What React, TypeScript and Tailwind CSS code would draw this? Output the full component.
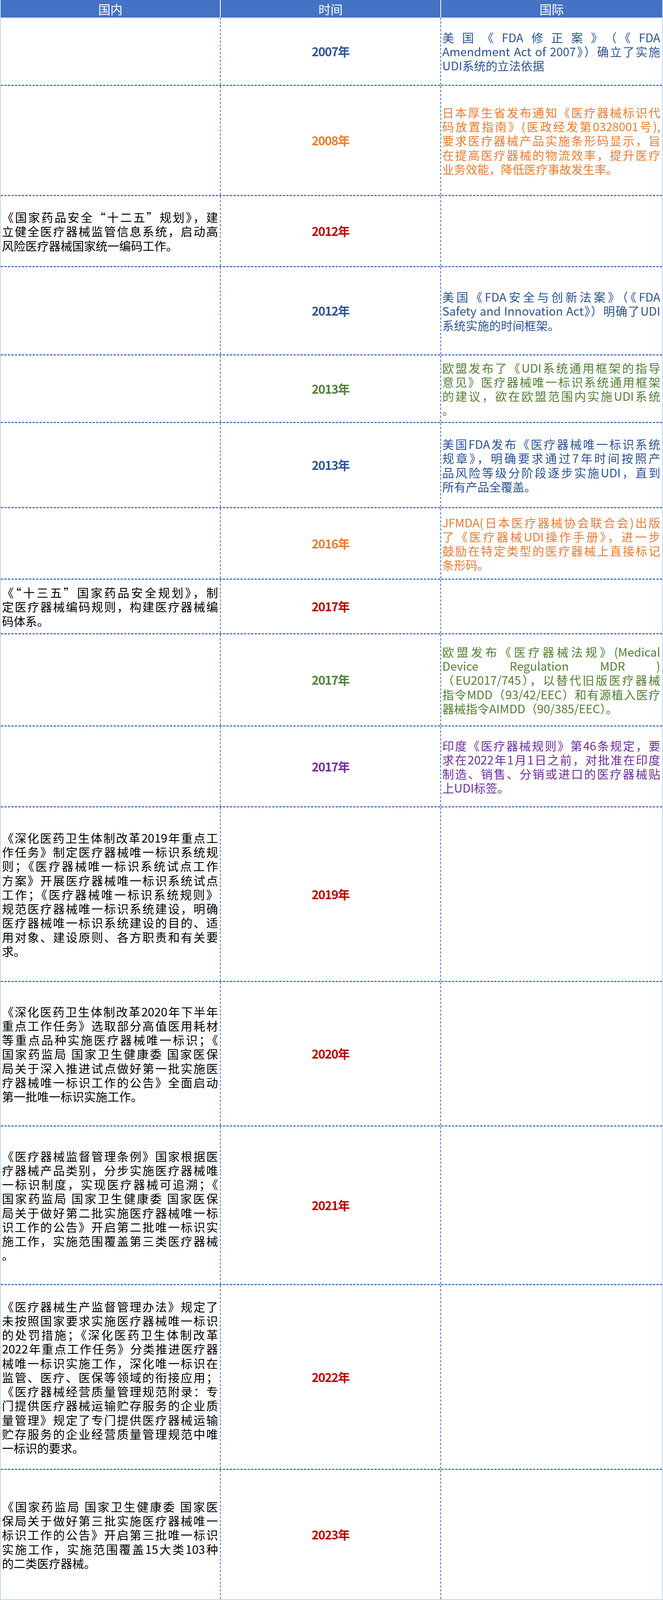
import React from 'react'

type Tone = 'blue' | 'orange' | 'red' | 'green' | 'purple'

interface Row {
  year: string
  tone: Tone
  side: 'cn' | 'intl'
  h: string
  lines: string[]
}

const toneText: Record<Tone, string> = {
  blue: 'text-[#2F5597]',
  orange: 'text-[#ED7D31]',
  red: 'text-[#C00000]',
  green: 'text-[#548235]',
  purple: 'text-[#7030A0]',
}

// row heights fit the 4096px tall window
const rows: Row[] = [
  {
    year: '2007年',
    tone: 'blue',
    side: 'intl',
    h: 'h-[175px]',
    lines: ['美国《FDA修正案》（《FDA', 'Amendment Act of 2007》）确立了实施', 'UDI系统的立法依据'],
  },
  {
    year: '2008年',
    tone: 'orange',
    side: 'intl',
    h: 'h-[282px]',
    lines: [
      '日本厚生省发布通知《医疗器械标识代',
      '码放置指南》(医政经发第0328001号),',
      '要求医疗器械产品实施条形码显示，旨',
      '在提高医疗器械的物流效率，提升医疗',
      '业务效能，降低医疗事故发生率。',
    ],
  },
  {
    year: '2012年',
    tone: 'red',
    side: 'cn',
    h: 'h-[182px]',
    lines: ['《国家药品安全“十二五”规划》，建', '立健全医疗器械监管信息系统，启动高', '风险医疗器械国家统一编码工作。'],
  },
  {
    year: '2012年',
    tone: 'blue',
    side: 'intl',
    h: 'h-[226px]',
    lines: ['美国《FDA安全与创新法案》（《FDA', 'Safety and Innovation Act》）明确了UDI', '系统实施的时间框架。'],
  },
  {
    year: '2013年',
    tone: 'green',
    side: 'intl',
    h: 'h-[173px]',
    lines: [
      '欧盟发布了《UDI系统通用框架的指导',
      '意见》医疗器械唯一标识系统通用框架',
      '的建议，欲在欧盟范围内实施UDI系统',
      '。',
    ],
  },
  {
    year: '2013年',
    tone: 'blue',
    side: 'intl',
    h: 'h-[218px]',
    lines: [
      '美国FDA发布《医疗器械唯一标识系统',
      '规章》，明确要求通过7年时间按照产',
      '品风险等级分阶段逐步实施UDI，直到',
      '所有产品全覆盖。',
    ],
  },
  {
    year: '2016年',
    tone: 'orange',
    side: 'intl',
    h: 'h-[183px]',
    lines: [
      'JFMDA(日本医疗器械协会联合会)出版',
      '了《医疗器械UDI操作手册》，进一步',
      '鼓励在特定类型的医疗器械上直接标记',
      '条形码。',
    ],
  },
  {
    year: '2017年',
    tone: 'red',
    side: 'cn',
    h: 'h-[140px]',
    lines: ['《“十三五”国家药品安全规划》，制', '定医疗器械编码规则，构建医疗器械编', '码体系。'],
  },
  {
    year: '2017年',
    tone: 'green',
    side: 'intl',
    h: 'h-[236px]',
    lines: [
      '欧盟发布《医疗器械法规》(Medical',
      'Device Regulation MDR )',
      '（EU2017/745），以替代旧版医疗器械',
      '指令MDD（93/42/EEC）和有源植入医疗',
      '器械指令AIMDD（90/385/EEC）。',
    ],
  },
  {
    year: '2017年',
    tone: 'purple',
    side: 'intl',
    h: 'h-[207px]',
    lines: [
      '印度《医疗器械规则》第46条规定，要',
      '求在2022年1月1日之前，对批准在印度',
      '制造、销售、分销或进口的医疗器械贴',
      '上UDI标签。',
    ],
  },
  {
    year: '2019年',
    tone: 'red',
    side: 'cn',
    h: 'h-[447px]',
    lines: [
      '《深化医药卫生体制改革2019年重点工',
      '作任务》制定医疗器械唯一标识系统规',
      '则；《医疗器械唯一标识系统试点工作',
      '方案》开展医疗器械唯一标识系统试点',
      '工作；《医疗器械唯一标识系统规则》',
      '规范医疗器械唯一标识系统建设，明确',
      '医疗器械唯一标识系统建设的目的、适',
      '用对象、建设原则、各方职责和有关要',
      '求。',
    ],
  },
  {
    year: '2020年',
    tone: 'red',
    side: 'cn',
    h: 'h-[370px]',
    lines: [
      '《深化医药卫生体制改革2020年下半年',
      '重点工作任务》选取部分高值医用耗材',
      '等重点品种实施医疗器械唯一标识；《',
      '国家药监局 国家卫生健康委 国家医保',
      '局关于深入推进试点做好第一批实施医',
      '疗器械唯一标识工作的公告》全面启动',
      '第一批唯一标识实施工作。',
    ],
  },
  {
    year: '2021年',
    tone: 'red',
    side: 'cn',
    h: 'h-[406px]',
    lines: [
      '《医疗器械监督管理条例》国家根据医',
      '疗器械产品类别，分步实施医疗器械唯',
      '一标识制度，实现医疗器械可追溯；《',
      '国家药监局 国家卫生健康委 国家医保',
      '局关于做好第二批实施医疗器械唯一标',
      '识工作的公告》开启第二批唯一标识实',
      '施工作，实施范围覆盖第三类医疗器械',
      '。',
    ],
  },
  {
    year: '2022年',
    tone: 'red',
    side: 'cn',
    h: 'h-[473px]',
    lines: [
      '《医疗器械生产监督管理办法》规定了',
      '未按照国家要求实施医疗器械唯一标识',
      '的处罚措施；《深化医药卫生体制改革',
      '2022年重点工作任务》分类推进医疗器',
      '械唯一标识实施工作，深化唯一标识在',
      '监管、医疗、医保等领域的衔接应用；',
      '《医疗器械经营质量管理规范附录：专',
      '门提供医疗器械运输贮存服务的企业质',
      '量管理》规定了专门提供医疗器械运输',
      '贮存服务的企业经营质量管理规范中唯',
      '一标识的要求。',
    ],
  },
  {
    year: '2023年',
    tone: 'red',
    side: 'cn',
    h: 'h-[331px]',
    lines: [
      '《国家药监局 国家卫生健康委 国家医',
      '保局关于做好第三批实施医疗器械唯一',
      '标识工作的公告》开启第三批唯一标识',
      '实施工作，实施范围覆盖15大类103种',
      '的二类医疗器械。',
    ],
  },
]

function CellText({ lines, color }: { lines: string[]; color: string }) {
  return (
    <div className={`flex min-w-0 flex-col pl-[3px] pr-[5px] text-[30px] leading-[36.2px] ${color}`}>
      {lines.map((line, i) => (
        <div
          key={i}
          className={
            i < lines.length - 1
              ? 'whitespace-nowrap text-justify [text-align-last:justify]'
              : 'whitespace-nowrap text-left'
          }
        >
          {line}
        </div>
      ))}
    </div>
  )
}

export default function App() {
  return (
    <div className="w-full bg-white font-['Noto_Sans_CJK_SC',sans-serif]">
      <div className="border-x-2 border-b-2 border-[#BDD7EE]">
        {/* header */}
        <div className="grid h-[45px] grid-cols-[563px_564px_minmax(0,1fr)] bg-[#4472C4] text-[31px] text-white">
          <div className="flex items-center justify-center border-r-2 border-white">国内</div>
          <div className="flex items-center justify-center border-r-2 border-white">时间</div>
          <div className="flex items-center justify-center">国际</div>
        </div>

        {rows.map((row, idx) => {
          const last = idx === rows.length - 1
          return (
            <div
              key={idx}
              className={`grid grid-cols-[563px_564px_minmax(0,1fr)] ${row.h} ${
                last ? '' : 'border-b-[3px] border-dashed border-[#4472C4]'
              }`}
            >
              <div className="flex min-w-0 flex-col justify-center border-r-2 border-dashed border-[#4472C4]">
                {row.side === 'cn' && <CellText lines={row.lines} color="text-black" />}
              </div>
              <div className="flex items-center justify-center border-r-2 border-dashed border-[#4472C4]">
                <span className={`text-[31px] font-bold tracking-[-1.5px] ${toneText[row.tone]}`}>{row.year}</span>
              </div>
              <div className="flex min-w-0 flex-col justify-center">
                {row.side === 'intl' && <CellText lines={row.lines} color={toneText[row.tone]} />}
              </div>
            </div>
          )
        })}
      </div>
    </div>
  )
}
